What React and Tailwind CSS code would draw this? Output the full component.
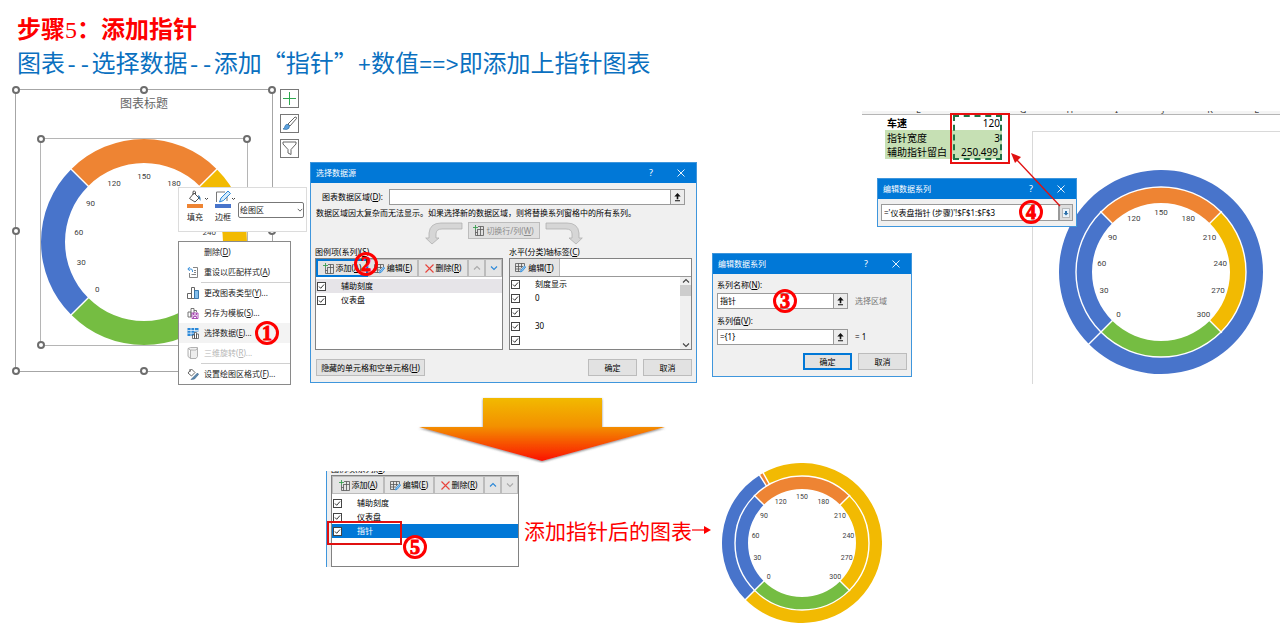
import React from "react";

const BLUE = "#4874cb";
const ORANGE = "#ee8433";
const YELLOW = "#f2ba02";
const GREEN = "#75bd42";

// Angles are in degrees, clockwise from the top of the circle
const gaugeSegments = [
  { from: -135, to: -45, color: BLUE },
  { from: -45, to: 45, color: ORANGE },
  { from: 45, to: 135, color: YELLOW },
  { from: 135, to: 225, color: GREEN },
];

const pointerSegments = [
  { from: -135, to: -32, color: BLUE },
  { from: -32, to: -29, color: ORANGE },
  { from: -29, to: 225, color: YELLOW },
];

// One series with a single value, the ring is closed except for its seam
const plainSegments = [{ from: -135, to: 224.9, color: BLUE }];

const scale = [0, 30, 60, 90, 120, 150, 180, 210, 240, 270, 300];

const point = (angle, r) => {
  const rad = (angle * Math.PI) / 180;
  return [r * Math.sin(rad), -r * Math.cos(rad)];
};

const arcPath = (from, to, outer, inner) => {
  const large = to - from > 180 ? 1 : 0;
  const [a, b] = [point(from, outer), point(to, outer)];
  const [c, d] = [point(to, inner), point(from, inner)];
  return `M${a} A${outer} ${outer} 0 ${large} 1 ${b} L${c} A${inner} ${inner} 0 ${large} 0 ${d} Z`;
};

function Gauge({ size, rings, labelRadius, fontSize, className }) {
  const half = size / 2;
  return (
    <svg
      viewBox={`${-half} ${-half} ${size} ${size}`}
      width={size}
      height={size}
      className={className}
    >
      {rings.map((ring, i) => (
        <g key={i}>
          {ring.segments.map((s) => (
            <path
              key={s.from}
              d={arcPath(s.from, s.to, ring.outer, ring.inner)}
              fill={s.color}
            />
          ))}
          {ring.segments.map((s) => {
            const [x1, y1] = point(s.from, ring.inner - 1);
            const [x2, y2] = point(s.from, ring.outer + 1);
            return (
              <line key={s.from} x1={x1} y1={y1} x2={x2} y2={y2} stroke="#fff" strokeWidth="1.4" />
            );
          })}
          {i > 0 && <circle r={ring.outer} fill="none" stroke="#fff" strokeWidth="1.4" />}
        </g>
      ))}
      {scale.map((value) => {
        const [x, y] = point(-135 + value * 0.9, labelRadius);
        return (
          <text
            key={value}
            x={x}
            y={y + fontSize * 0.36}
            textAnchor="middle"
            fontSize={fontSize}
            fill="#404040"
            fontFamily="Roboto, sans-serif"
          >
            {value}
          </text>
        );
      })}
    </svg>
  );
}

function Badge({ children, className }) {
  return (
    <span
      className={`absolute z-20 flex size-6 items-center justify-center rounded-full border-3 border-[#fe0000] font-['Liberation_Serif',serif] text-[20px] leading-none font-bold text-[#fe0000] [-webkit-text-stroke:1px_#fe0000] ${className}`}
    >
      {children}
    </span>
  );
}

// Text followed by its underlined access key, e.g. 添加(A)
function Keyed({ text, k, after = "" }) {
  return (
    <span className="whitespace-nowrap">
      {text}(<u>{k}</u>){after}
    </span>
  );
}

function GridIcon({ edit }) {
  return (
    <svg width="11" height="11" viewBox="0 0 11 11" fill="none" className="shrink-0">
      {edit ? (
        <>
          <path d="M.5 1.5H9.5V4M.5 1.5V9.5H5M.5 4.5H8M.5 7H6M3.5 1.5V9.5M6.5 1.5V6" stroke="#555" strokeWidth=".8" />
          <path d="M5.5 10L6 8L9.5 4L10.7 5L7.3 9.2Z" fill="#8cc4f0" stroke="#2b88d8" strokeWidth=".8" />
        </>
      ) : (
        <>
          <path d="M5 1.5H10.5V10.5H2.5V5M7.5 1.5V10.5M4.5 4V10.5M2.5 7.5H4.5M5 4.5H10.5" stroke="#555" strokeWidth=".8" />
          <path d="M2.5 0V5M0 2.5H5" stroke="#3a9d50" strokeWidth=".9" />
        </>
      )}
    </svg>
  );
}

function CrossIcon() {
  return (
    <svg width="9" height="9" viewBox="0 0 9 9" className="shrink-0">
      <path d="M.5.5L8.5 8.5M8.5.5L.5 8.5" stroke="#e8433b" strokeWidth="1.1" />
    </svg>
  );
}

function Chevron({ up, color = "#444", size = 8 }) {
  return (
    <svg width={size} height={size} viewBox="0 0 8 8" fill="none">
      <path d={up ? "M1 5.5L4 2.5L7 5.5" : "M1 2.5L4 5.5L7 2.5"} stroke={color} strokeWidth="1.1" />
    </svg>
  );
}

function UpArrow() {
  return (
    <svg width="7" height="9" viewBox="0 0 7 9">
      <path d="M3.5 0L6.7 3.6H4.3V6.3H2.7V3.6H.3ZM1 7.3H6V8.3H1Z" fill="#111" />
    </svg>
  );
}

function BendArrow({ flip }) {
  return (
    <svg width="38" height="24" viewBox="0 0 38 24" className={flip ? "-scale-x-100" : ""}>
      <path
        d="M37 1V7H17Q11 7 11 12V16H14L7 22L.7 16H4V11Q5 1 16 1Z"
        fill="#d6d6d6"
        stroke="#aaa"
        strokeWidth=".7"
      />
    </svg>
  );
}

function TitleBar({ children }) {
  return (
    <div className="flex h-5 items-center bg-[#0178d7] pl-[5px] text-white">
      <h2 className="flex-1">{children}</h2>
      <button className="w-[30px] text-center text-[9px]" aria-label="帮助">?</button>
      <button className="flex w-[30px] justify-center" aria-label="关闭">
        <svg width="8" height="8" viewBox="0 0 8 8">
          <path d="M.5.5L7.5 7.5M7.5.5L.5 7.5" stroke="#fff" strokeWidth=".9" />
        </svg>
      </button>
    </div>
  );
}

function Dialog({ title, className = "", children }) {
  return (
    <section
      className={`shrink-0 border border-[#3f96dc] bg-[#f0f0f0] text-[8px] leading-[12px] text-black ${className}`}
    >
      <TitleBar>{title}</TitleBar>
      {children}
    </section>
  );
}

function RangeInput({ id, value, className = "" }) {
  return (
    <div className={`flex h-4 ${className}`}>
      <input
        id={id}
        defaultValue={value}
        className="min-w-0 flex-1 border border-[#9a9a9a] bg-white px-[2px]"
      />
      <button className="flex w-[14px] items-center justify-center border border-l-0 border-[#9a9a9a] bg-[#ececec]" aria-label="折叠">
        <UpArrow />
      </button>
    </div>
  );
}

function DialogButton({ children, primary, className = "" }) {
  return (
    <button
      className={`h-[17px] bg-[#e2e2e2] ${primary ? "border-2 border-[#0178d7]" : "border border-[#bcbcbc]"} ${className}`}
    >
      {children}
    </button>
  );
}

function CheckRow({ label, className = "" }) {
  return (
    <label className={`flex h-[14px] items-center ${className}`}>
      <span className="mr-[15px] grid shrink-0">
        <input
          type="checkbox"
          defaultChecked
          aria-label={label || "空白"}
          className="col-start-1 row-start-1 size-[9px] appearance-none border border-[#444] bg-white"
        />
        <svg width="9" height="9" viewBox="0 0 9 9" className="pointer-events-none col-start-1 row-start-1">
          <path d="M2 4.5L3.7 6.3L7 2.5" fill="none" stroke="#333" strokeWidth="1" />
        </svg>
      </span>
      {label}
    </label>
  );
}

function ListToolbar({ active }) {
  const base = "flex items-center justify-center gap-[2px]";
  const plain = "border border-[#bcbcbc] bg-[#e4e4e4]";
  return (
    <div className="flex h-[18px] bg-[#f0f0f0]">
      <button
        className={`w-[52px] ${base} ${active ? "border-2 border-[#0178d7] bg-[#e4e4e4]" : plain}`}
      >
        <GridIcon />
        <Keyed text="添加" k="A" />
      </button>
      <button className={`w-[50px] ${base} ${plain}`}>
        <GridIcon edit />
        <Keyed text="编辑" k="E" />
      </button>
      <button className={`w-[50px] ${base} ${plain}`}>
        <CrossIcon />
        <Keyed text="删除" k="R" />
      </button>
      <button className={`flex-1 ${base} ${plain}`} aria-label="上移">
        <Chevron up color={active ? "#aaa" : "#2b88d8"} />
      </button>
      <button className={`flex-1 ${base} ${plain}`} aria-label="下移">
        <Chevron color={active ? "#2b88d8" : "#aaa"} />
      </button>
    </div>
  );
}

const menuItems = [
  { text: "删除", k: "D" },
  { text: "重设以匹配样式", k: "A", icon: "reset" },
  { text: "更改图表类型", k: "Y", after: "...", icon: "bars", line: true },
  { text: "另存为模板", k: "S", after: "...", icon: "template" },
  { text: "选择数据", k: "E", after: "...", icon: "data", active: true },
  { text: "三维旋转", k: "R", after: "...", icon: "cube", disabled: true },
  { text: "设置绘图区格式", k: "F", after: "...", icon: "format", line: true },
];

function MenuIcon({ name }) {
  return (
    <svg width="12" height="12" viewBox="0 0 12 12" fill="none" strokeWidth=".9">
      {name === "reset" && (
        <>
          <path d="M6 1.500H10.500V11.500H2.500V7M7 4.500H9M7 6.500H9M4.500 8.500H9" stroke="#777" />
          <path d="M1 3H4Q5.500 3 5.500 5V6M2.800 1L.800 3L2.800 5" stroke="#2b88d8" />
        </>
      )}
      {name === "bars" && (
        <>
          <path d="M.500 6.500H4.500V11.500H.500Z" fill="#fff" stroke="#555" />
          <path d="M4.500 .500H7.500V11.500H4.500Z" fill="#fff" stroke="#555" />
          <path d="M7.500 3.500H11.500V11.500H7.500Z" fill="#83beec" stroke="#2b6fa8" />
        </>
      )}
      {name === "template" && (
        <>
          <path d="M1 5H4V10H1ZM4 1.500H7V6M4 1.500V10M7 3.500H9.500V5" stroke="#666" />
          <path d="M5 6H11V11.500H5ZM6.500 6V8H9.500V6M6.500 11.500V9.500H9.500V11.500" stroke="#a43fb0" />
        </>
      )}
      {name === "data" && (
        <>
          <path d="M.5 1H11.500V4.500H8V9H.500Z" fill="#2b88d8" />
          <path d="M.500 3.500H11.500M.500 6.200H8M4 1V9M7.500 1V4.500" stroke="#fff" strokeWidth=".7" />
          <path d="M5.500 8H7.500V11.500H5.500ZM7.500 5.500H9.500V11.500H7.500ZM9.500 7H11.500V11.500H9.500Z" fill="#fff" stroke="#444" strokeWidth=".7" />
        </>
      )}
      {name === "cube" && (
        <path d="M1 1.500L3.500 .500H10.500V9.500L9 11.500H3.500V3L1 1.500V9.500L3.500 11.500M3.500 3H9L10.500 1" fill="#eee" stroke="#aaa" />
      )}
      {name === "format" && (
        <>
          <path d="M1 5L4.500 1L8 4.500L4.500 8ZM3 1V4" stroke="#555" />
          <path d="M5 10.500L10.500 5L11.500 6.500L7.500 11L4 11.500Z" fill="#5b87ad" stroke="#355f87" strokeWidth=".6" />
        </>
      )}
    </svg>
  );
}

function ContextMenu() {
  return (
    <ul className="absolute top-[151px] left-[162px] w-[113px] border border-[#8a8a8a] bg-white">
      {menuItems.map((item) => (
        <li key={item.text} className={item.line ? "before:ml-[22px] before:block before:h-px before:bg-[#d0d0d0]" : ""}>
          <button
            disabled={item.disabled}
            className={`flex h-5 w-full items-center pl-2 ${item.active ? "bg-[#f3f3f3]" : ""} ${item.disabled ? "text-[#b5b5b5]" : ""}`}
          >
            <span className="mr-[5px] w-3">{item.icon && <MenuIcon name={item.icon} />}</span>
            <Keyed text={item.text} k={item.k} after={item.after} />
          </button>
        </li>
      ))}
    </ul>
  );
}

function MiniToolbar() {
  return (
    <div className="absolute top-[97px] left-[162px] flex h-[45px] w-[129px] items-start border border-[#dcdcdc] bg-white pt-[2px] pr-[2px] pl-2">
      <button className="w-[28px] text-left">
        <svg width="23" height="18" viewBox="0 0 23 18" fill="none">
          <path d="M2.5 8.5L7 3L12 8L8 12ZM6 5V1.5Q7.5 0 8.500 2V5" stroke="#555" />
          <path d="M11 5Q14 6 13.5 11Q12 9 11.5 7" fill="#2b6fa8" />
          <path d="M18 8L19.5 9.5L21 8" stroke="#444" />
          <path d="M0 14H16V18H0Z" fill={ORANGE} />
        </svg>
        <span className="mt-[3px] block">填充</span>
      </button>
      <button className="w-[23px] text-left">
        <svg width="22" height="18" viewBox="0 0 22 18" fill="none">
          <path d="M10 2H1.5V12M12 7V11" stroke="#777" />
          <path d="M4.5 12L6 8L13 1L15.5 3.5L8.5 10.5Z" fill="#d4eafa" stroke="#2b88d8" />
          <path d="M17 8L18.5 9.5L20 8" stroke="#444" />
          <path d="M0 14H16V18H0Z" fill={BLUE} />
        </svg>
        <span className="mt-[3px] block">边框</span>
      </button>
      <div className="mt-3 grid flex-1 items-center">
        <select
          aria-label="图表元素"
          className="col-start-1 row-start-1 h-4 w-full appearance-none rounded-[2px] border border-[#777] bg-white px-px"
        >
          <option>绘图区</option>
        </select>
        <span className="pointer-events-none col-start-1 row-start-1 mr-px justify-self-end">
          <Chevron size={6} />
        </span>
      </div>
    </div>
  );
}

function Handle({ className }) {
  return (
    <span className={`absolute size-2 -translate-x-1/2 -translate-y-1/2 rounded-full border-2 border-[#6d6d6d] bg-white ${className}`} />
  );
}

function SelectedChart() {
  return (
    <div className="flex shrink-0">
      <div className="relative h-[283px] w-[258px] border border-[#a6a6a6] text-[8px] leading-[12px] text-[#222]">
        <h2 className="mt-[5px] text-center text-[12px] leading-[18px] text-[#666]">图表标题</h2>
        <div className="relative mx-auto mt-[25px] size-[208px] border border-[#b5b5b5]">
          <Gauge
            size={206}
            rings={[{ segments: gaugeSegments, outer: 103, inner: 79 }]}
            labelRadius={66}
            fontSize={8}
          />
          <Handle className="top-0 left-0" />
          <Handle className="top-0 left-full" />
          <Handle className="top-full left-0" />
        </div>
        <Handle className="top-0 left-0" />
        <Handle className="top-0 left-1/2" />
        <Handle className="top-0 left-full" />
        <Handle className="top-1/2 left-0" />
        <Handle className="top-1/2 left-full" />
        <Handle className="top-full left-0" />
        <Handle className="top-full left-1/2" />
        <MiniToolbar />
        <ContextMenu />
        <Badge className="top-[231px] left-[239px]">1</Badge>
      </div>
      <div className="ml-[7px] flex flex-col gap-[6px]">
        <button className="size-[19px] border border-[#777] bg-white" aria-label="图表元素">
          <svg viewBox="0 0 17 17">
            <path d="M8.5 2V15M2 8.5H15" stroke="#2fa84f" strokeWidth="1" />
          </svg>
        </button>
        <button className="size-[19px] border border-[#777] bg-white" aria-label="图表样式">
          <svg viewBox="0 0 17 17">
            <path d="M7 9L14 2Q16 2 15.5 3.5L9 11Z" fill="#fff" stroke="#555" strokeWidth=".9" />
            <path d="M2 14Q4 13 4 11Q5 8.5 7 9.5L8.5 11Q8.5 14 5.5 14.5Z" fill="#5ba0dc" stroke="#2b6fa8" strokeWidth=".7" />
          </svg>
        </button>
        <button className="size-[19px] border border-[#777] bg-white" aria-label="图表筛选器">
          <svg viewBox="0 0 17 17">
            <path d="M2 2H15V4L10 9.5V14.5L7 13V9.5L2 4Z" fill="none" stroke="#666" strokeWidth="1" />
          </svg>
        </button>
      </div>
    </div>
  );
}

function SelectDataDialog() {
  return (
    <Dialog title="选择数据源" className="relative mt-[73px] ml-[11px] w-[387px]">
      <div className="px-1 pb-[6px]">
        <div className="mt-[6px] flex items-center px-[7px]">
          <label htmlFor="range" className="w-[67px]">
            <Keyed text="图表数据区域" k="D" after=":" />
          </label>
          <RangeInput id="range" className="flex-1" />
        </div>
        <p className="mt-[2px] pl-px whitespace-nowrap">
          数据区域因太复杂而无法显示。如果选择新的数据区域，则将替换系列窗格中的所有系列。
        </p>
        <div className="mt-[3px] flex items-start justify-center gap-[5px]">
          <BendArrow />
          <button disabled className="flex h-[17px] w-[72px] items-center justify-center gap-[2px] border border-[#bcbcbc] bg-[#e0e0e0] text-[#8c8c8c]">
            <GridIcon />
            <Keyed text="切换行/列" k="W" />
          </button>
          <BendArrow flip />
        </div>
        <div className="grid grid-cols-[188px_183px] gap-x-[6px]">
          <h3><Keyed text="图例项(系列)" k="S" /></h3>
          <h3><Keyed text="水平(分类)轴标签" k="C" /></h3>
          <div className="h-[92px] border border-[#828282] bg-white">
            <ListToolbar active />
            <CheckRow label="辅助刻度" className="mt-[2px] bg-[#e6e4e8] pl-px" />
            <CheckRow label="仪表盘" className="pl-px" />
          </div>
          <div className="flex h-[92px] flex-col border border-[#828282] bg-white">
            <div className="h-[18px] shrink-0 border-b border-[#999]">
              <button className="flex h-[17px] w-[50px] items-center justify-center gap-[2px] border-r border-[#bcbcbc] bg-[#e4e4e4]">
                <GridIcon edit />
                <Keyed text="编辑" k="T" />
              </button>
            </div>
            <div className="flex min-h-0 flex-1">
              <div className="flex-1 pl-px">
                <CheckRow label="刻度显示" />
                <CheckRow label="0" />
                <CheckRow label="" />
                <CheckRow label="30" />
                <CheckRow label="" />
              </div>
              <div className="flex w-[11px] flex-col items-center justify-between bg-[#f0f0f0]">
                <Chevron up />
                <span className="mb-auto h-[11px] w-full bg-[#cdcdcd]" />
                <Chevron />
              </div>
            </div>
          </div>
        </div>
        <div className="mt-[9px] flex gap-[6px]">
          <DialogButton className="mr-auto ml-px w-[109px]">
            <Keyed text="隐藏的单元格和空单元格" k="H" />
          </DialogButton>
          <DialogButton className="w-[49px]">确定</DialogButton>
          <DialogButton className="w-[49px]">取消</DialogButton>
        </div>
      </div>
      <Badge className="top-[89px] left-[43px]">2</Badge>
    </Dialog>
  );
}

function EditSeriesDialog() {
  return (
    <Dialog title="编辑数据系列" className="relative mt-[26px] mb-[7px] w-[200px]">
      <div className="px-[4px] pb-[6px]">
        <label htmlFor="series-name" className="mt-[5px] mb-[2px] block">
          <Keyed text="系列名称" k="N" after=":" />
        </label>
        <div className="flex items-center gap-[7px]">
          <RangeInput id="series-name" value="指针" className="w-[131px]" />
          <span className="text-[#777]">选择区域</span>
        </div>
        <label htmlFor="series-value" className="mt-[6px] mb-[2px] block">
          <Keyed text="系列值" k="V" after=":" />
        </label>
        <div className="flex items-center gap-[7px]">
          <RangeInput id="series-value" value="={1}" className="w-[131px]" />
          <span>= 1</span>
        </div>
        <div className="mt-2 flex justify-end gap-[6px]">
          <DialogButton primary className="w-[49px]">确定</DialogButton>
          <DialogButton className="w-[49px]">取消</DialogButton>
        </div>
      </div>
      <Badge className="top-[35px] left-[60px]">3</Badge>
    </Dialog>
  );
}

function Sheet() {
  return (
    <div className="relative ml-[173px] h-[44px]">
      <table className="border-collapse text-[10px] leading-[14px] text-black">
        <tbody>
          <tr>
            <th className="h-[15px] w-[66px] p-0 pl-[2px] text-left font-bold">车速</th>
            <td className="w-[51px] p-0 pr-[2px] text-right">120</td>
          </tr>
          <tr className="bg-[#c6e0b4]">
            <th className="h-[15px] p-0 pl-[2px] text-left font-normal">指针宽度</th>
            <td className="p-0 pr-[2px] text-right">3</td>
          </tr>
          <tr className="bg-[#c6e0b4]">
            <th className="h-[14px] p-0 pl-[2px] text-left font-normal whitespace-nowrap">辅助指针留白</th>
            <td className="p-0 pr-[4px] text-right">250.499</td>
          </tr>
        </tbody>
      </table>
      <span className="absolute top-0 left-[68px] h-[45px] w-[49px] border-2 border-dashed border-[#217346]" />
      <span className="absolute -top-[2px] left-[65px] h-[51px] w-[60px] border-2 border-[#e81010]" />
    </div>
  );
}

function RangePicker() {
  return (
    <div className="relative z-10 mt-[19px] ml-[165px] w-[200px]">
      <Dialog title="编辑数据系列">
        <div className="flex h-[27px] items-start px-[3px] pt-[5px]">
          <input
            aria-label="系列值"
            defaultValue="='仪表盘指针 (步骤)'!$F$1:$F$3"
            className="h-[17px] min-w-0 flex-1 border border-[#9a9a9a] bg-white px-[2px]"
          />
          <button className="flex h-[17px] w-[14px] items-center justify-center border border-[#9a9a9a] bg-[#ddd]" aria-label="展开">
            <svg width="8" height="10" viewBox="0 0 8 10">
              <path d="M.5.5H7.5V9.5H.5Z" fill="#eaf3fa" stroke="#999" strokeWidth=".6" />
              <path d="M4 7.5L1.5 5H3V3H5V5H6.5Z" fill="#2b6fa8" />
            </svg>
          </button>
        </div>
      </Dialog>
      <Badge className="top-[22px] left-[142px]">4</Badge>
      <svg width="56" height="58" viewBox="0 0 56 58" className="absolute -top-[26px] left-[133px]">
        <path d="M50 54L6 7" stroke="#e01010" strokeWidth="1.3" />
        <path d="M1 1L11 5L5 11Z" fill="#e01010" />
      </svg>
    </div>
  );
}

function Workbook() {
  return (
    <div className="mt-[22px] ml-[15px] min-w-0 flex-1">
      <div className="ml-[150px] flex h-1 items-end overflow-hidden border-b border-[#b5b5b5] bg-[#f4f4f4] pl-[34px] text-[9px] leading-[8px] text-[#444]">
        <span className="w-[48px] pl-5">E</span>
        <span className="w-[58px]" />
        {["G", "H", "I", "J", "K", "L"].map((col) => (
          <span key={col} className="w-[48px] text-center">{col}</span>
        ))}
      </div>
      <div className="flex">
        <div className="w-[320px] shrink-0">
          <Sheet />
          <RangePicker />
          <EditSeriesDialog />
        </div>
        <div className="mt-4 flex-1 self-stretch border-t border-l border-[#d9d9d9]">
          <Gauge
            size={204}
            rings={[
              { segments: plainSegments, outer: 102, inner: 84 },
              { segments: gaugeSegments, outer: 85, inner: 69 },
            ]}
            labelRadius={60}
            fontSize={8}
            className="mt-[38px] ml-[26px]"
          />
        </div>
      </div>
    </div>
  );
}

function DownArrow() {
  return (
    <svg width="252" height="66" viewBox="0 0 252 66" className="ml-[416px]">
      <defs>
        <linearGradient id="flow" x1="0" y1="0" x2="0" y2="1">
          <stop offset="0" stopColor="#f2ba02" />
          <stop offset=".45" stopColor="#f39000" />
          <stop offset="1" stopColor="#fb1200" />
        </linearGradient>
        <filter id="soft">
          <feDropShadow dx="0" dy="1" stdDeviation="1" floodColor="#555" floodOpacity=".7" />
        </filter>
      </defs>
      <path d="M67 1H186V30H249L126 64L3 30H67Z" fill="url(#flow)" filter="url(#soft)" />
    </svg>
  );
}

function ResultList() {
  return (
    <section className="relative mt-2 w-[193px] border-l border-[#3f96dc] bg-[#f0f0f0] text-[8px] leading-[12px] text-black">
      <div className="flex h-1 items-end overflow-hidden pl-1">
        <Keyed text="图例项(系列)" k="S" />
      </div>
      <div className="ml-[4px] h-[92px] border border-[#828282] bg-white">
        <ListToolbar />
        <CheckRow label="辅助刻度" className="mt-[2px] pl-px" />
        <CheckRow label="仪表盘" className="pl-px" />
        <CheckRow label="指针" className="bg-[#0178d7] pl-px text-white" />
      </div>
      <span className="absolute top-[50px] left-0 h-[24px] w-[75px] border-2 border-[#e01010]" />
      <Badge className="top-[64px] left-[76px]">5</Badge>
    </section>
  );
}

function Mono({ children }) {
  return (
    <span className="font-['Liberation_Mono',monospace] text-[22px] leading-none">{children}</span>
  );
}

function App() {
  return (
    <main
      lang="zh-CN"
      className="min-h-screen overflow-x-hidden bg-white pt-3 font-['Noto_Sans','Noto_Sans_CJK_SC',sans-serif]"
    >
      <header className="pl-[17px] font-['Noto_Sans_CJK_SC',sans-serif]">
        <h1 className="text-[24px] leading-8 font-bold text-[#fe0000]">
          步骤
          <span className="font-['Liberation_Serif',serif] leading-none font-normal">5</span>
          ：添加指针
        </h1>
        <p className="text-[24px] leading-9 text-[#0a70c0]">
          图表<Mono>--</Mono>选择数据<Mono>--</Mono>添加“指针”<Mono>+</Mono>数值
          <Mono>==&gt;</Mono>即添加上指针图表
        </p>
      </header>

      <div className="mt-[9px] flex items-start pl-[15px]">
        <SelectedChart />
        <SelectDataDialog />
        <Workbook />
      </div>

      <div className="mt-[13px]">
        <DownArrow />
      </div>

      <div className="flex items-start pl-[326px]">
        <ResultList />
        <p className="mt-[52px] ml-[5px] flex items-center font-['Noto_Sans_CJK_SC',sans-serif] text-[21px] leading-[30px] text-[#fe0000]">
          添加指针后的图表
          <svg width="20" height="10" viewBox="0 0 20 10">
            <path d="M0 5H13" stroke="#fe0000" strokeWidth="1.2" />
            <path d="M12 1L19 5L12 9Z" fill="#fe0000" />
          </svg>
        </p>
        <Gauge
          size={160}
          rings={[
            { segments: pointerSegments, outer: 80, inner: 66 },
            { segments: gaugeSegments, outer: 67, inner: 54 },
          ]}
          labelRadius={47}
          fontSize={7}
          className="ml-[10px]"
        />
      </div>
    </main>
  );
}

export default App;
